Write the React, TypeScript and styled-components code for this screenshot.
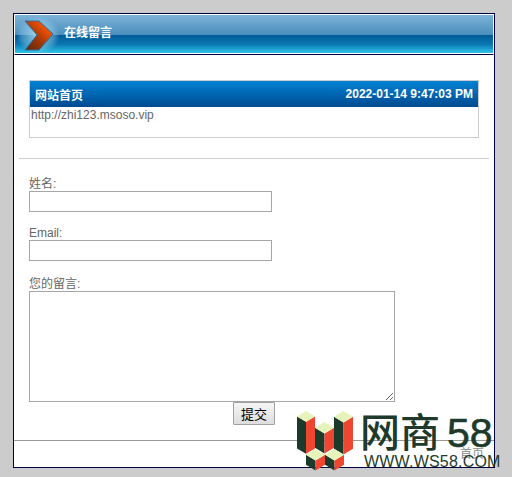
import React from "react";
import styled, { createGlobalStyle } from "styled-components";

const Global = createGlobalStyle`
  html, body { margin: 0; padding: 0; background: #cccccc; }
  body { font-family: "Liberation Sans", "Noto Sans CJK SC", sans-serif; font-size: 12px; color: #666666; }
  * { box-sizing: border-box; }
`;
const Page = styled.div`
  width: 512px; height: 477px; padding: 13px 0 0 13px; position: relative; overflow: hidden;
`;
const Frame = styled.div`
  width: 482px; height: 455px; border: 1px solid #000040; background: #fff;
  display: flex; flex-direction: column;
`;
const Header = styled.div`
  flex: none; height: 41px; border: 1px solid #fff; border-bottom: 1px solid #000040;
  box-shadow: inset 0 -1px 0 #fff;
  background: linear-gradient(#7db2d6 0%, #4a8fbe 50%, #005b98 52%, #0a76b0 75%, #2fc4ea 97%, #fff 97%);
  display: flex; align-items: center; position: relative;
`;
const Chevron = styled.svg`
  flex: none; width: 44px; height: 38px; margin-left: 3px;
`;
const HeaderTitle = styled.span`
  margin-left: 2px; color: #fff; font-weight: 700; font-size: 12px; line-height: 14px; margin-top: -4px;
`;
const MessageBox = styled.div`
  flex: none; margin: 25px 0 0 15px; width: 450px; height: 58px; border: 1px solid #cccccc;
`;
const MessageHead = styled.div`
  height: 26px; background: linear-gradient(#0082d4, #004a90); color: #fff; font-weight: 700; font-size: 12px;
  display: flex; justify-content: space-between; align-items: center; padding: 0 5px 0 5px;
`;
const MessageUrl = styled.div`
  padding-left: 1px; line-height: 16px;
`;
const Divider = styled.hr`
  flex: none; margin: 20px 5px 0; border: 0; height: 1px; background: #cccccc;
`;
const Form = styled.form`
  flex: none; padding: 18px 0 0 15px; display: flex; flex-direction: column;
`;
const Label = styled.label<{ $gap?: number }>`
  display: block; line-height: 14px; margin-top: ${(p) => p.$gap ?? 0}px;
`;
const Input = styled.input`
  display: block; width: 243px; height: 21px; border: 1px solid #a6a6a6; background: #fff; padding: 0; margin: 0;
`;
const Area = styled.textarea`
  display: block; width: 366px; height: 111px; border: 1px solid #a6a6a6; background: #fff; padding: 0; margin: 0;
`;
const SubmitRow = styled.div`
  display: flex; justify-content: center; margin-left: -15px;
`;
const Submit = styled.button`
  width: 42px; height: 23px; border: 1px solid #a0a0a0; background: linear-gradient(#f6f6f6, #dddddd);
  border-radius: 1px; color: #000; font: 13px "Liberation Sans", "Noto Sans CJK SC", sans-serif; padding: 0;
`;
const FootRule = styled.hr`
  flex: none; margin: 15px 0 0; border: 0; height: 1px; background: #999999;
`;
const Footer = styled.div`
  flex: none; padding: 6px 10px 0 0; text-align: right; color: #8a8a8a; font-size: 12px; line-height: 14px;
`;
const Logo = styled.div`
  position: absolute; left: 296px; top: 410px; width: 204px; height: 62px;
`;
const LogoMark = styled.svg`
  position: absolute; left: 0; top: 0; width: 64px; height: 62px;
`;
const LogoName = styled.span`
  position: absolute; left: 64px; top: -3px; font-size: 40px; line-height: 46px; color: #1d3a2c; white-space: nowrap;
  font-family: "Noto Sans CJK SC", sans-serif; font-weight: 500;
`;
const LogoDigits = styled.span`
  font-family: "Liberation Sans", sans-serif; font-weight: 400; font-size: 41px; margin-left: 7px;
  -webkit-text-stroke: 0.6px #1d3a2c;
`;
const LogoUrl = styled.span`
  position: absolute; left: 68px; top: 43px; font-size: 16px; line-height: 18px; color: #1d3a2c; white-space: nowrap;
  letter-spacing: 0.2px;
`;

type BlockProps = { x: number; top: number; h: number; w: number };
const Block = ({ x, top, h, w }: BlockProps) => {
  const d = w * 0.6;
  return (
    <g>
      <polygon points={`${x},${top + d} ${x + w},${top + 2 * d} ${x + w},${top + 2 * d + h} ${x},${top + d + h}`} fill="#1c3a2a" />
      <polygon points={`${x + w},${top + 2 * d} ${x + 2 * w},${top + d} ${x + 2 * w},${top + d + h} ${x + w},${top + 2 * d + h}`} fill="#ee4630" />
      <polygon points={`${x},${top + d} ${x + w},${top} ${x + 2 * w},${top + d} ${x + w},${top + 2 * d}`} fill="#e6f4bc" />
    </g>
  );
};

export default function App() {
  return (
    <Page>
      <Global />
      <Frame>
        <Header>
          <Chevron viewBox="0 0 44 38">
            <defs>
              <radialGradient id="glow">
                <stop offset="0" stopColor="#bfe6f6" stopOpacity="0.85" />
                <stop offset="0.7" stopColor="#9ad4ee" stopOpacity="0.4" />
                <stop offset="1" stopColor="#9ad4ee" stopOpacity="0" />
              </radialGradient>
              <linearGradient id="chev" x1="0" y1="1" x2="1" y2="0">
                <stop offset="0" stopColor="#5a2208" />
                <stop offset="0.45" stopColor="#a83a08" />
                <stop offset="0.7" stopColor="#e84e02" />
                <stop offset="1" stopColor="#ff5a00" />
              </linearGradient>
            </defs>
            <ellipse cx="20" cy="19" rx="22" ry="19" fill="url(#glow)" />
            <polygon points="7,5 21,5 35,18 21,34 7,34 19,19" fill="url(#chev)" stroke="#2d6f9c" strokeWidth="1" />
          </Chevron>
          <HeaderTitle>在线留言</HeaderTitle>
        </Header>
        <MessageBox>
          <MessageHead>
            <span>网站首页</span>
            <span>2022-01-14 9:47:03 PM</span>
          </MessageHead>
          <MessageUrl>http://zhi123.msoso.vip</MessageUrl>
        </MessageBox>
        <Divider />
        <Form>
          <Label>姓名:</Label>
          <Input />
          <Label $gap={14}>Email:</Label>
          <Input />
          <Label $gap={16}>您的留言:</Label>
          <Area />
          <SubmitRow>
            <Submit type="button">提交</Submit>
          </SubmitRow>
        </Form>
        <FootRule />
        <Footer>首页</Footer>
      </Frame>
      <Logo>
        <LogoMark viewBox="0 0 64 62">
          <Block x={1} top={1} h={32} w={9} />
          <Block x={38} top={1} h={32} w={9.5} />
          <Block x={19} top={12} h={20} w={9.5} />
          <Block x={10} top={39} h={10} w={9.5} />
          <Block x={29} top={39} h={10} w={9.5} />
        </LogoMark>
        <LogoName>网商<LogoDigits>58</LogoDigits></LogoName>
        <LogoUrl>WWW.WS58.COM</LogoUrl>
      </Logo>
    </Page>
  );
}
